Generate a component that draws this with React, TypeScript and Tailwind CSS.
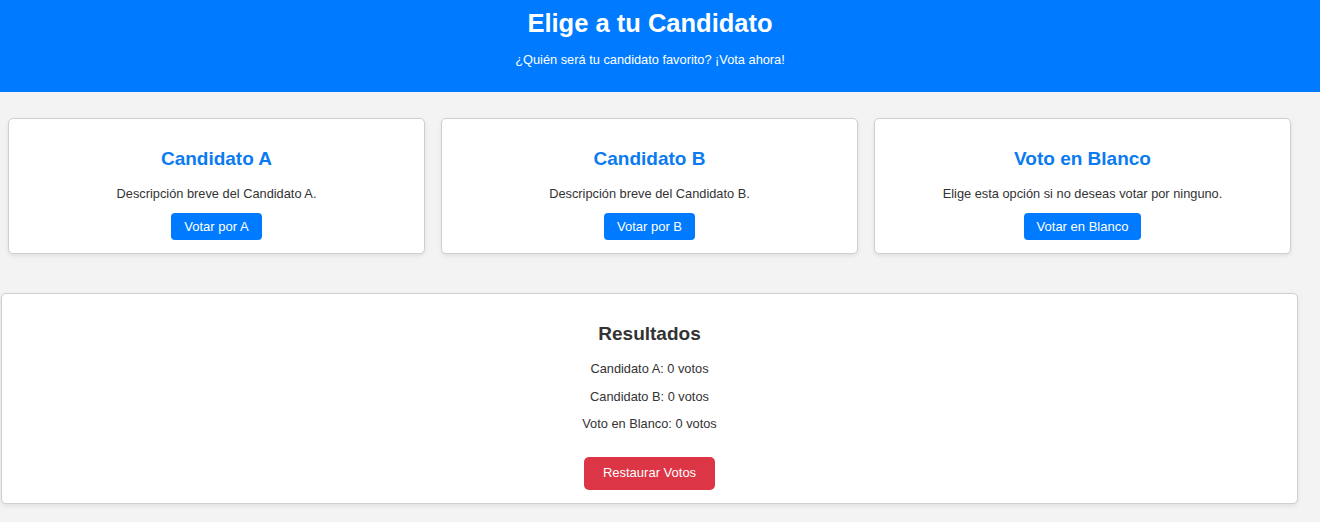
import React, { useState } from 'react';

type VoteKey = 'A' | 'B' | 'Blanco';

const candidates: { key: VoteKey; title: string; description: string; button: string }[] = [
  { key: 'A', title: 'Candidato A', description: 'Descripción breve del Candidato A.', button: 'Votar por A' },
  { key: 'B', title: 'Candidato B', description: 'Descripción breve del Candidato B.', button: 'Votar por B' },
  { key: 'Blanco', title: 'Voto en Blanco', description: 'Elige esta opción si no deseas votar por ninguno.', button: 'Votar en Blanco' },
];

export default function App() {
  const [votes, setVotes] = useState<Record<VoteKey, number>>({ A: 0, B: 0, Blanco: 0 });

  const vote = (key: VoteKey) => setVotes((v) => ({ ...v, [key]: v[key] + 1 }));
  const reset = () => setVotes({ A: 0, B: 0, Blanco: 0 });

  return (
    <div className="min-h-[522px] bg-[#f3f3f3] font-['Liberation_Sans',Arial,sans-serif] text-[#333]">
      <header className="h-[92px] bg-[#007bff] pr-[20px] pt-[8px] text-center text-white">
        <h1 className="text-[25.5px] font-bold leading-[30px]">Elige a tu Candidato</h1>
        <p className="mt-[14px] text-[12.8px] leading-[15px]">¿Quién será tu candidato favorito? ¡Vota ahora!</p>
      </header>

      <div className="mt-[26px] flex gap-[16px] pl-[8px]">
        {candidates.map((c) => (
          <div
            key={c.key}
            className="w-[417px] rounded-[5px] border border-[#cfcfcf] bg-white pb-[13px] pt-[29px] text-center shadow-[0_2px_4px_rgba(0,0,0,0.08)]"
          >
            <h2 className="text-[19px] font-bold leading-[22px] text-[#0a7bf0]">{c.title}</h2>
            <p className="mt-[16px] text-[12.8px] leading-[15px]">{c.description}</p>
            <button
              onClick={() => vote(c.key)}
              className="mt-[12px] h-[27px] rounded-[4px] bg-[#007bff] px-[13px] text-[13px] leading-[27px] text-white"
            >
              {c.button}
            </button>
          </div>
        ))}
      </div>

      <div className="ml-[1px] mt-[39px] w-[1297px] rounded-[5px] border border-[#cfcfcf] bg-white pb-[13px] pt-[28px] text-center shadow-[0_2px_4px_rgba(0,0,0,0.08)]">
        <h2 className="text-[19px] font-bold leading-[24px] text-[#333]">Resultados</h2>
        <div className="mt-[9px] text-[12.8px]">
          <p className="leading-[27.5px]">Candidato A: {votes.A} votos</p>
          <p className="leading-[27.5px]">Candidato B: {votes.B} votos</p>
          <p className="leading-[27.5px]">Voto en Blanco: {votes.Blanco} votos</p>
        </div>
        <button
          onClick={reset}
          className="mt-[19px] h-[33px] w-[131px] rounded-[5px] bg-[#dc3545] text-[13px] text-white"
        >
          Restaurar Votos
        </button>
      </div>
    </div>
  );
}
